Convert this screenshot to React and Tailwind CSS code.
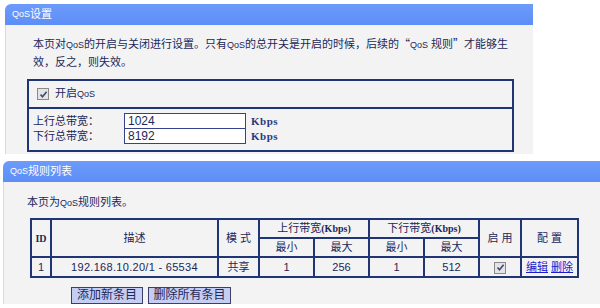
import React from "react";

const navy = "border-[#1f3575]";

// small latin "QoS" like the router's bitmap font
const Q = () => <span className="text-[9px]">QoS</span>;

const Check = () => (
  <span className="inline-flex items-center justify-center w-[12px] h-[12px] border border-[#8a8a8a] bg-[#e4e4e4]">
    <svg width="9" height="9" viewBox="0 0 9 9">
      <path d="M1.5 4.5 L3.5 6.8 L7.6 1.8" fill="none" stroke="#3c4a7a" strokeWidth="1.6" />
    </svg>
  </span>
);

const Kbps = () => (
  <span className="font-['Liberation_Serif',serif] font-bold text-[11px] text-[#2a3a80] tracking-[0.5px]">Kbps</span>
);

const PanelHeader = ({ children }) => (
  <div className="h-[21px] rounded-tl-[6px] bg-gradient-to-b from-[#6c9bfb] to-[#5d8ef6] text-white pl-[7px] flex items-center">
    {children}
  </div>
);

const th = `border-2 ${navy} text-center font-normal p-0`;
const td = `border-2 ${navy} text-center p-0`;

export default function App() {
  return (
    <div className="w-[600px] h-[308px] bg-white overflow-hidden pt-[4px] text-[11px] text-[#1c2758] font-['Liberation_Sans','Noto_Sans_CJK_SC',sans-serif] leading-[17px]">
      {/* QoS settings panel */}
      <div className="ml-[5px] w-[528px]">
        <PanelHeader>
          <Q />设置
        </PanelHeader>
        <div className="h-[129px] bg-[#f3f3f4] border-l border-[#f5d5a6] pt-[10px]">
          <div className="pl-[27px] whitespace-nowrap">
            本页对<Q />的开启与关闭进行设置。只有<Q />的总开关是开启的时候，后续的
            <span className="font-['Noto_Sans_CJK_SC',sans-serif]">“</span>
            <Q /> 规则
            <span className="font-['Noto_Sans_CJK_SC',sans-serif]">”</span>
            才能够生
            <br />
            效，反之，则失效。
          </div>
          <div className={`ml-[21px] mt-[8px] w-[487px] h-[73px] border-2 ${navy} flex flex-col`}>
            <div className={`h-[28px] border-b-2 ${navy} flex items-center pl-[8px] gap-[6px]`}>
              <Check />
              <span>
                开启<Q />
              </span>
            </div>
            <div className="pt-[4px] pl-[4px] flex flex-col">
              <div className="flex items-center h-[16px]">
                <span className="w-[91px]">上行总带宽：</span>
                <span className="w-[122px] h-[16px] border border-[#34448a] bg-white pl-[3px] leading-[14px] text-[12px]">1024</span>
                <span className="ml-[5px]"><Kbps /></span>
              </div>
              <div className="flex items-center h-[16px] -mt-[1px]">
                <span className="w-[91px]">下行总带宽：</span>
                <span className="w-[122px] h-[16px] border border-[#34448a] bg-white pl-[3px] leading-[14px] text-[12px]">8192</span>
                <span className="ml-[5px]"><Kbps /></span>
              </div>
            </div>
          </div>
        </div>
      </div>

      {/* QoS rule list panel */}
      <div className="ml-[3px] mt-[7px] w-[597px]">
        <PanelHeader>
          <Q />规则列表
        </PanelHeader>
        <div className="h-[122px] bg-[#f3f3f4] border-l border-[#f5d5a6] pt-[12px] pl-[23px]">
          <div>
            本页为<Q />规则列表。
          </div>
          <table className={`ml-[3px] mt-[6px] border-collapse table-fixed w-[547px] border-2 ${navy}`}>
            <colgroup>
              <col className="w-[20px]" />
              <col className="w-[167px]" />
              <col className="w-[41px]" />
              <col className="w-[55px]" />
              <col className="w-[55px]" />
              <col className="w-[55px]" />
              <col className="w-[55px]" />
              <col className="w-[42px]" />
              <col className="w-[57px]" />
            </colgroup>
            <thead>
              <tr className="h-[19px]">
                <th rowSpan={2} className={th}>
                  <span className="font-['Liberation_Serif',serif] font-bold text-[10px]">ID</span>
                </th>
                <th rowSpan={2} className={th}>描述</th>
                <th rowSpan={2} className={th}>模 式</th>
                <th colSpan={2} className={th}>
                  上行带宽<span className="font-['Liberation_Serif',serif] font-bold text-[10px]">(Kbps)</span>
                </th>
                <th colSpan={2} className={th}>
                  下行带宽<span className="font-['Liberation_Serif',serif] font-bold text-[10px]">(Kbps)</span>
                </th>
                <th rowSpan={2} className={th}>启 用</th>
                <th rowSpan={2} className={th}>配 置</th>
              </tr>
              <tr className="h-[18px]">
                <th className={th}>最小</th>
                <th className={th}>最大</th>
                <th className={th}>最小</th>
                <th className={th}>最大</th>
              </tr>
            </thead>
            <tbody>
              <tr className="h-[20px]">
                <td className={td}>1</td>
                <td className={`${td} tracking-[0.3px]`}>192.168.10.20/1 - 65534</td>
                <td className={td}>共享</td>
                <td className={td}>1</td>
                <td className={td}>256</td>
                <td className={td}>1</td>
                <td className={td}>512</td>
                <td className={td}>
                  <span className="inline-flex align-middle">
                    <Check />
                  </span>
                </td>
                <td className={td}>
                  <a href="#" className="text-[#1b1bd0] underline">编辑</a>{" "}
                  <a href="#" className="text-[#1b1bd0] underline">删除</a>
                </td>
              </tr>
            </tbody>
          </table>
          <div className="flex gap-[5px] mt-[9px] ml-[44px]">
            <button className="h-[17px] w-[72px] bg-[#c6cdf2] border border-[#3b3f6e] text-[12px] leading-[15px] text-[#1c2758]">
              添加新条目
            </button>
            <button className="h-[17px] w-[83px] bg-[#c6cdf2] border border-[#3b3f6e] text-[12px] leading-[15px] text-[#1c2758]">
              删除所有条目
            </button>
          </div>
        </div>
      </div>
    </div>
  );
}
